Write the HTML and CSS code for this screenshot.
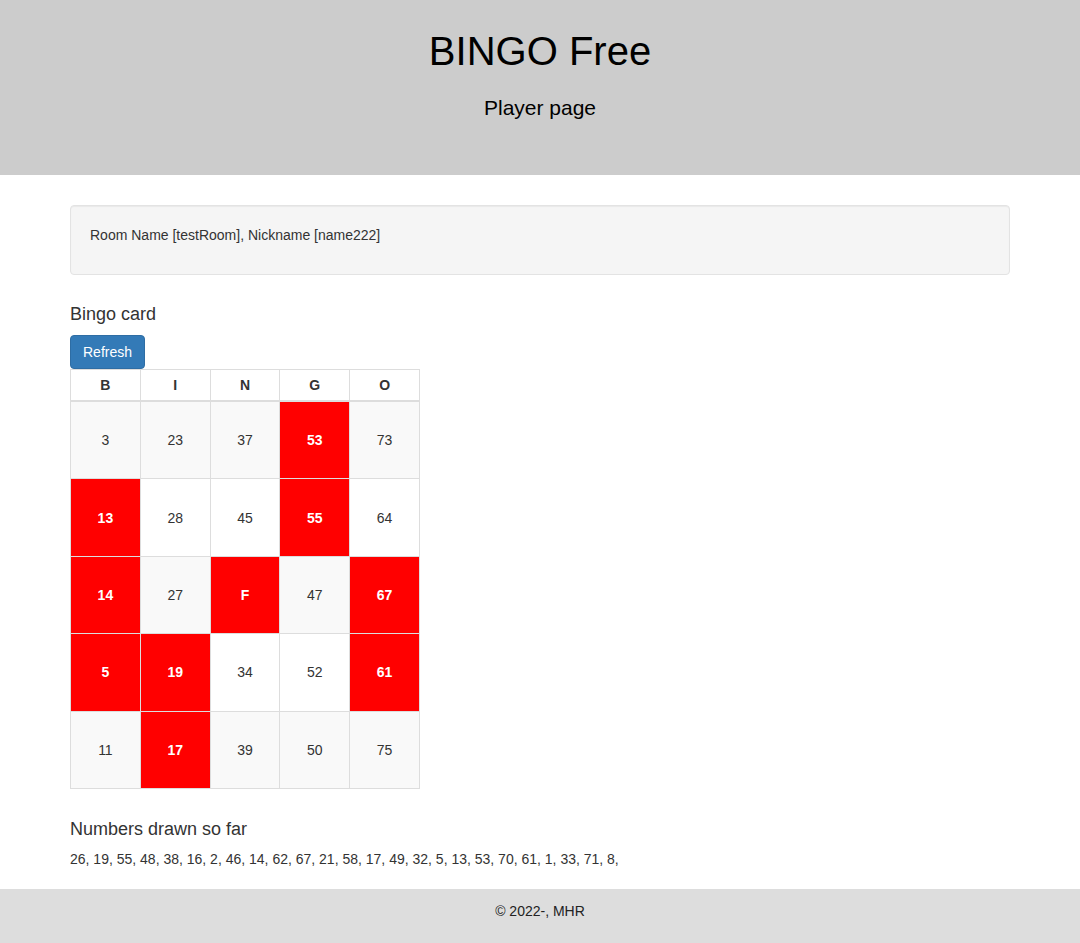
FILE: index.html
```html
<!DOCTYPE html>
<html lang="en">
<head>
    <meta charset="UTF-8">
    <meta name="viewport" content="width=device-width, initial-scale=1.0">
    <title>BINGO Free - Player page</title>
    <link rel="stylesheet" href="styles.css">
</head>
<body>
    <header class="page-header">
        <h1>BINGO Free</h1>
        <p class="lead">Player page</p>
    </header>

    <div class="container">
        <div class="well">
            <p>Room Name [testRoom], Nickname [name222]</p>
        </div>

        <h4 class="section-title first">Bingo card</h4>
        <button type="button" class="btn-refresh">Refresh</button>
        <table class="card">
            <thead>
                <tr>
                    <th>B</th>
                    <th>I</th>
                    <th>N</th>
                    <th>G</th>
                    <th>O</th>
                </tr>
            </thead>
            <tbody>
                <tr>
                    <td>3</td>
                    <td>23</td>
                    <td>37</td>
                    <td class="hit">53</td>
                    <td>73</td>
                </tr>
                <tr>
                    <td class="hit">13</td>
                    <td>28</td>
                    <td>45</td>
                    <td class="hit">55</td>
                    <td>64</td>
                </tr>
                <tr>
                    <td class="hit">14</td>
                    <td>27</td>
                    <td class="hit">F</td>
                    <td>47</td>
                    <td class="hit">67</td>
                </tr>
                <tr>
                    <td class="hit">5</td>
                    <td class="hit">19</td>
                    <td>34</td>
                    <td>52</td>
                    <td class="hit">61</td>
                </tr>
                <tr>
                    <td>11</td>
                    <td class="hit">17</td>
                    <td>39</td>
                    <td>50</td>
                    <td>75</td>
                </tr>
            </tbody>
        </table>

        <h4 class="section-title">Numbers drawn so far</h4>
        <p class="drawn">26, 19, 55, 48, 38, 16, 2, 46, 14, 62, 67, 21, 58, 17, 49, 32, 5, 13, 53, 70, 61, 1, 33, 71, 8,</p>
    </div>

    <footer class="page-footer">
        <p>&copy; 2022-, MHR</p>
    </footer>
</body>
</html>
```

FILE: styles.css
```css
body {
    font-family: "Liberation Sans", Arial, Helvetica, sans-serif;
    font-size: 14px;
    line-height: 20px;
    color: #333;
    margin: 0;
    background-color: #fff;
}
.page-header {
    background-color: #ccc;
    color: #000;
    text-align: center;
    padding: 29px 0 53px;
}
.page-header h1 {
    font-size: 40px;
    font-weight: normal;
    line-height: 44px;
    margin: 0 0 20px;
}
.page-header .lead {
    font-size: 21px;
    line-height: 29px;
    margin: 0;
}
.container {
    width: 940px;
    margin: 30px auto 0;
    padding-bottom: 20px;
}
.well {
    background-color: #f5f5f5;
    border: 1px solid #e3e3e3;
    border-radius: 4px;
    box-shadow: inset 0 1px 1px rgba(0,0,0,0.05);
    padding: 19px;
}
.well p {
    margin: 0 0 10px;
}
.section-title {
    font-size: 18px;
    font-weight: normal;
    line-height: 20px;
    margin: 30px 0 10px;
}
.section-title.first {
    margin: 29px 0 11px;
}
.btn-refresh {
    display: block;
    font-family: inherit;
    font-size: 14px;
    line-height: 20px;
    padding: 6px 12px;
    color: #fff;
    background-color: #337ab7;
    border: 1px solid #2e6da4;
    border-radius: 4px;
    cursor: pointer;
}
.btn-refresh:hover {
    background-color: #286090;
}
.card {
    width: 350px;
    border-collapse: collapse;
    table-layout: fixed;
}
.card th, .card td {
    border: 1px solid #ddd;
    text-align: center;
    vertical-align: middle;
    padding: 5px;
}
.card th {
    font-weight: bold;
    line-height: 20px;
    border-bottom-width: 2px;
}
.card td {
    height: 66.4px;
}
.card tbody tr:nth-child(odd) td {
    background-color: #f9f9f9;
}
.card tbody tr td.hit {
    background-color: #f00;
    color: #fff;
    font-weight: bold;
}
.drawn {
    margin: 0;
}
.page-footer {
    background-color: #ddd;
    color: #222;
    text-align: center;
    padding: 12px 0 22px;
}
.page-footer p {
    margin: 0;
}
```
